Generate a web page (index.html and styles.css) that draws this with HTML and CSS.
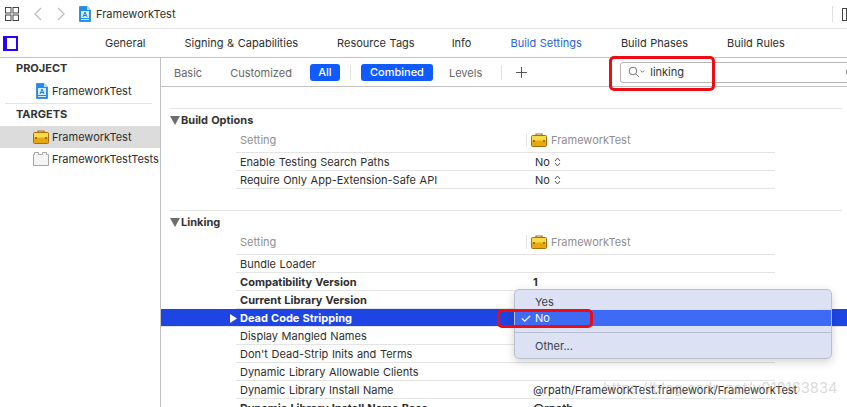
FILE: index.html
```html
<!DOCTYPE html>
<html lang="en">
<head>
<meta charset="utf-8">
<title>FrameworkTest</title>
<link rel="stylesheet" href="styles.css">
</head>
<body>
<svg class="defs" width="0" height="0">
  <defs>
    <symbol id="doc" viewBox="0 0 12 16">
      <path d="M.5.5h7.500l3.500 3.500v11.500h-11z" fill="#1c8fee" stroke="#0f6fd0" stroke-width=".6"/>
      <path d="M8 .5v3.500h3.500z" fill="#bfe0fb"/>
      <rect x="2" y="5" width="8" height="7" fill="#d7ecfd"/>
      <path d="M4 11l2-5 2 5M4.800 9.500h2.400" fill="none" stroke="#1c7fe0" stroke-width="1"/>
      <rect x="2" y="13" width="8" height="1" fill="#d7ecfd"/>
    </symbol>
    <symbol id="case" viewBox="0 0 16 14">
      <path d="M5 3V1h6v2" fill="none" stroke="#a8700c" stroke-width="1.200"/>
      <rect x=".5" y="2.500" width="15" height="11" rx="1" fill="#f4c422" stroke="#a8700c"/>
      <rect x="1" y="3" width="14" height="4" fill="#f9d94e"/>
      <rect x="1" y="8" width="14" height="5" fill="#e4a90f"/>
      <rect x="2" y="7" width="2" height="2" fill="#a8700c"/>
      <rect x="12" y="7" width="2" height="2" fill="#a8700c"/>
    </symbol>
    <symbol id="down" viewBox="0 0 10 9">
      <path d="M0 0h10L5 9z" fill="#6e6e6e"/>
    </symbol>
    <symbol id="updown" viewBox="0 0 7 10">
      <path d="M1 4l2.500-3L6 4M1 6l2.500 3L6 6" fill="none" stroke="#555" stroke-width="1"/>
    </symbol>
  </defs>
</svg>

<header class="toolbar">
  <svg class="grid-icon" width="14" height="14" viewBox="0 0 14 14" fill="none" stroke="#444" stroke-width="1">
    <rect x=".5" y=".5" width="5.500" height="5.500"/><rect x="8" y=".5" width="5.500" height="5.500"/>
    <rect x=".5" y="8" width="5.500" height="5.500"/><rect x="8" y="8" width="5.500" height="5.500"/>
  </svg>
  <svg class="back" width="8" height="14" viewBox="0 0 8 14" fill="none" stroke="#bdbdbd" stroke-width="1.300"><path d="M7 1L1 7l6 6"/></svg>
  <svg class="forward" width="8" height="14" viewBox="0 0 8 14" fill="none" stroke="#bdbdbd" stroke-width="1.300"><path d="M1 1l6 6-6 6"/></svg>
  <svg class="title-doc" width="12" height="16"><use href="#doc"/></svg>
  <span class="title">FrameworkTest</span>
  <span class="toolbar-end"><i class="vline"></i><i class="mini-rect"></i></span>
</header>

<nav class="tabbar">
  <span class="panel-toggle"></span>
  <ul class="tabs">
    <li>General</li>
    <li>Signing &amp; Capabilities</li>
    <li class="tight">Resource Tags</li>
    <li>Info</li>
    <li class="active">Build Settings</li>
    <li>Build Phases</li>
    <li>Build Rules</li>
  </ul>
</nav>

<div class="main">
  <aside class="sidebar">
    <h2 class="side-head first">PROJECT</h2>
    <div class="side-item"><svg class="ic-doc" width="12" height="16"><use href="#doc"/></svg><span>FrameworkTest</span></div>
    <hr class="side-rule">
    <h2 class="side-head">TARGETS</h2>
    <div class="side-item selected"><svg width="16" height="14"><use href="#case"/></svg><span>FrameworkTest</span></div>
    <div class="side-item"><svg width="16" height="14" viewBox="0 0 16 14" fill="#f4f4f4" stroke="#a5a5a5"><path d="M.5 13.500v-11h1V.5h4v2h4V.5h4v2h2v11z"/></svg><span>FrameworkTestTests</span></div>
  </aside>

  <section class="editor">
    <div class="filterbar">
      <span class="f-item basic">Basic</span>
      <span class="f-item customized">Customized</span>
      <span class="pill all">All</span>
      <i class="f-div d1"></i>
      <span class="pill combined">Combined</span>
      <span class="f-item levels">Levels</span>
      <i class="f-div d2"></i>
      <svg class="plus" width="11" height="11" viewBox="0 0 11 11" stroke="#555" stroke-width="1"><path d="M5.500 0v11M0 5.500h11"/></svg>
      <div class="search">
        <svg width="17" height="12" viewBox="0 0 17 12" fill="none" stroke="#777" stroke-width="1"><circle cx="5" cy="5" r="3.800"/><path d="M8 8l3 3M12.500 4.500l1.800 1.800 1.800-1.800"/></svg>
        <span>linking</span>
        <i class="clear"></i>
      </div>
    </div>

    <div class="settings">
      <section class="group g-first">
        <h3 class="group-title"><svg width="10" height="9"><use href="#down"/></svg>Build Options</h3>
        <div class="row head"><div class="cells"><span class="name">Setting</span><span class="val"><svg width="16" height="14"><use href="#case"/></svg>FrameworkTest</span></div></div>
        <div class="row"><div class="cells"><span class="name">Enable Testing Search Paths</span><span class="value choice">No <svg width="7" height="10"><use href="#updown"/></svg></span></div></div>
        <div class="row"><div class="cells"><span class="name">Require Only App-Extension-Safe API</span><span class="value choice">No <svg width="7" height="10"><use href="#updown"/></svg></span></div></div>
      </section>

      <section class="group g-second">
        <h3 class="group-title"><svg width="10" height="9"><use href="#down"/></svg>Linking</h3>
        <div class="row head"><div class="cells"><span class="name">Setting</span><span class="val"><svg width="16" height="14"><use href="#case"/></svg>FrameworkTest</span></div></div>
        <div class="row"><div class="cells"><span class="name">Bundle Loader</span></div></div>
        <div class="row bold"><div class="cells"><span class="name">Compatibility Version</span><span class="value">1</span></div></div>
        <div class="row bold"><div class="cells"><span class="name">Current Library Version</span></div></div>
        <div class="row bold current"><div class="cells"><svg class="disclosure" width="7" height="9" viewBox="0 0 7 9"><path d="M0 0l7 4.500L0 9z" fill="#fff"/></svg><span class="name">Dead Code Stripping</span></div></div>
        <div class="row"><div class="cells"><span class="name">Display Mangled Names</span></div></div>
        <div class="row"><div class="cells"><span class="name">Don't Dead-Strip Inits and Terms</span></div></div>
        <div class="row"><div class="cells"><span class="name">Dynamic Library Allowable Clients</span></div></div>
        <div class="row"><div class="cells"><span class="name">Dynamic Library Install Name</span><span class="value">@rpath/FrameworkTest.framework/FrameworkTest</span></div></div>
        <div class="row bold"><div class="cells"><span class="name">Dynamic Library Install Name Base</span><span class="value">@rpath</span></div></div>
      </section>
    </div>
  </section>
</div>

<div class="menu">
  <div class="menu-item">Yes</div>
  <div class="menu-item checked"><span class="check">✓</span>No</div>
  <hr class="menu-sep">
  <div class="menu-item">Other...</div>
</div>

<i class="mark mark-search"></i>
<i class="mark mark-no"></i>
<span class="watermark">https://blog.csdn.net/u010163834</span>
</body>
</html>
```
FILE: styles.css
```css
* { box-sizing: border-box; }
html, body { margin: 0; height: 100%; }
body {
  width: 847px; height: 407px; overflow: hidden; position: relative;
  background: #fff; color: #2e2e2e;
  font-family: Inter, "Liberation Sans", sans-serif; font-size: 11px; line-height: 18px; word-spacing: .5px;
}
.defs { position: absolute; }
svg { display: block; flex: none; }

.toolbar { height: 29px; display: flex; align-items: center; border-bottom: 1px solid #e4e4e4; padding-left: 5px; }
.back { margin-left: 15px; }
.forward { margin-left: 15px; }
.title-doc { margin-left: 14px; }
.title { margin-left: 5px; }
.toolbar-end { margin-left: auto; display: flex; align-items: center; height: 28px; }
.vline { width: 1px; height: 16px; background: #e0e0e0; }
.mini-rect { width: 5px; height: 13px; border: 1px solid #444; margin-left: 9px; }

.tabbar { height: 29px; display: flex; align-items: center; border-bottom: 1px solid #c2c2c2; padding-left: 3px; }
.panel-toggle { width: 15px; height: 15px; border: 2px solid #2b00f5; border-left-width: 3px; background: linear-gradient(90deg, #2b00f5 0 1px, #fff 1px); }
.tabs { list-style: none; margin: 0 0 0 87px; padding: 0; display: flex; gap: 39px; }
.tabs .tight { margin-right: -2px; }
.tabs .active { color: #2a63d8; }

.main { display: flex; height: 349px; }
.sidebar { width: 161px; flex: none; border-right: 1px solid #c2c2c2; }
.side-head { margin: 0; padding-left: 16px; font-size: 11px; line-height: 14px; font-weight: 700; color: #333; }
.side-head.first { margin-top: 3px; }
.side-head + .side-item { margin-top: 5px; }
.side-item { height: 22px; display: flex; align-items: center; gap: 3px; padding-left: 33px; white-space: nowrap; }
.side-item.selected { background: #dcdcdc; }
.side-item .ic-doc { margin: 0 1px 0 3px; }
.side-rule { margin: 1px 8px 3px 5px; border: 0; border-top: 1px solid #e4e4e4; }

.editor { flex: 1; min-width: 0; overflow: hidden; }
.filterbar { height: 29px; border-bottom: 1px solid #c2c2c2; display: flex; align-items: center; padding-left: 13px; color: #666; overflow: hidden; }
.filterbar > * { flex: none; }
.f-item { padding-top: 1px; }
.customized { margin-left: 28px; }
.pill { height: 17px; line-height: 17px; border-radius: 3px; background: #0f5bff; color: #fff; font-weight: 500; text-align: center; }
.all { width: 30px; margin-left: 18px; }
.combined { width: 72px; margin-left: 10px; }
.f-div { width: 1px; height: 15px; background: #e2e2e2; margin-left: 10px; }
.levels { margin-left: 16px; }
.d2 { margin-left: 19px; }
.plus { margin-left: 14px; }
.search { width: 240px; height: 21px; margin-left: 93px; border: 1px solid #b5b5b5; border-radius: 3px; display: flex; align-items: center; gap: 5px; padding-left: 7px; color: #333; }
.clear { width: 8px; height: 8px; border-radius: 50%; background: #8a8a8a; margin: 0 5px 0 auto; }

.settings { padding-left: 9px; }
.group { width: 672px; border-top: 1px solid #e4e4e4; }
.g-first { margin-top: 21px; }
.g-second { margin-top: 21px; }
.group-title { margin: 0; height: 22px; display: flex; align-items: center; gap: 1px; font-size: 11px; font-weight: 700; color: #333; }
.row { margin: 0 -5px 0 -9px; padding-left: 75px; }
.cells { width: 539px; height: 18px; display: flex; border-bottom: 1px solid #e4e4e4; position: relative; white-space: nowrap; }
.name { padding-left: 4px; width: 297px; flex: none; }
.value { display: flex; align-items: center; gap: 4px; height: 17px; }
.choice { margin-left: 2px; }
.bold { font-weight: 700; }
.head { color: #8f8f8f; }
.head .cells { height: 22px; }
.val { display: flex; align-items: center; gap: 4px; border-left: 1px solid #e4e4e4; height: 14px; margin: 2px 0 0 -7px; padding-left: 4px; }
.current { height: 18px; padding-left: 0; background: #1e45e3; color: #fff; border-bottom: 1px solid #e4e4e4; }
.current .cells { border: 0; height: 17px; margin-left: 75px; }
.disclosure { position: absolute; left: -6px; top: 5px; }

.menu {
  position: absolute; left: 514px; top: 289px; width: 318px; height: 70px; padding-top: 4px;
  background: rgba(219, 225, 243, .97); border: 1px solid #bcc0cc; border-radius: 5px;
  box-shadow: 0 3px 10px rgba(0, 0, 0, .18); color: #3a3f4d;
}
.menu-item { height: 16px; line-height: 16px; padding-left: 20px; position: relative; }
.menu-item.checked { background: #3e6bf5; color: #fff; }
.check { position: absolute; left: 5px; font-size: 13px; }
.menu-sep { margin: 6px 0 5px; border: 0; border-top: 1px solid #b9bfd3; }

.mark { position: absolute; border: 3px solid #ee0c14; border-radius: 5px; }
.mark-search { left: 609px; top: 56px; width: 106px; height: 35px; }
.mark-no { left: 497px; top: 309px; width: 96px; height: 19px; }
.watermark { position: absolute; left: 603px; top: 379px; font-size: 14.700px; color: rgba(170, 170, 170, .45); white-space: nowrap; }
```
